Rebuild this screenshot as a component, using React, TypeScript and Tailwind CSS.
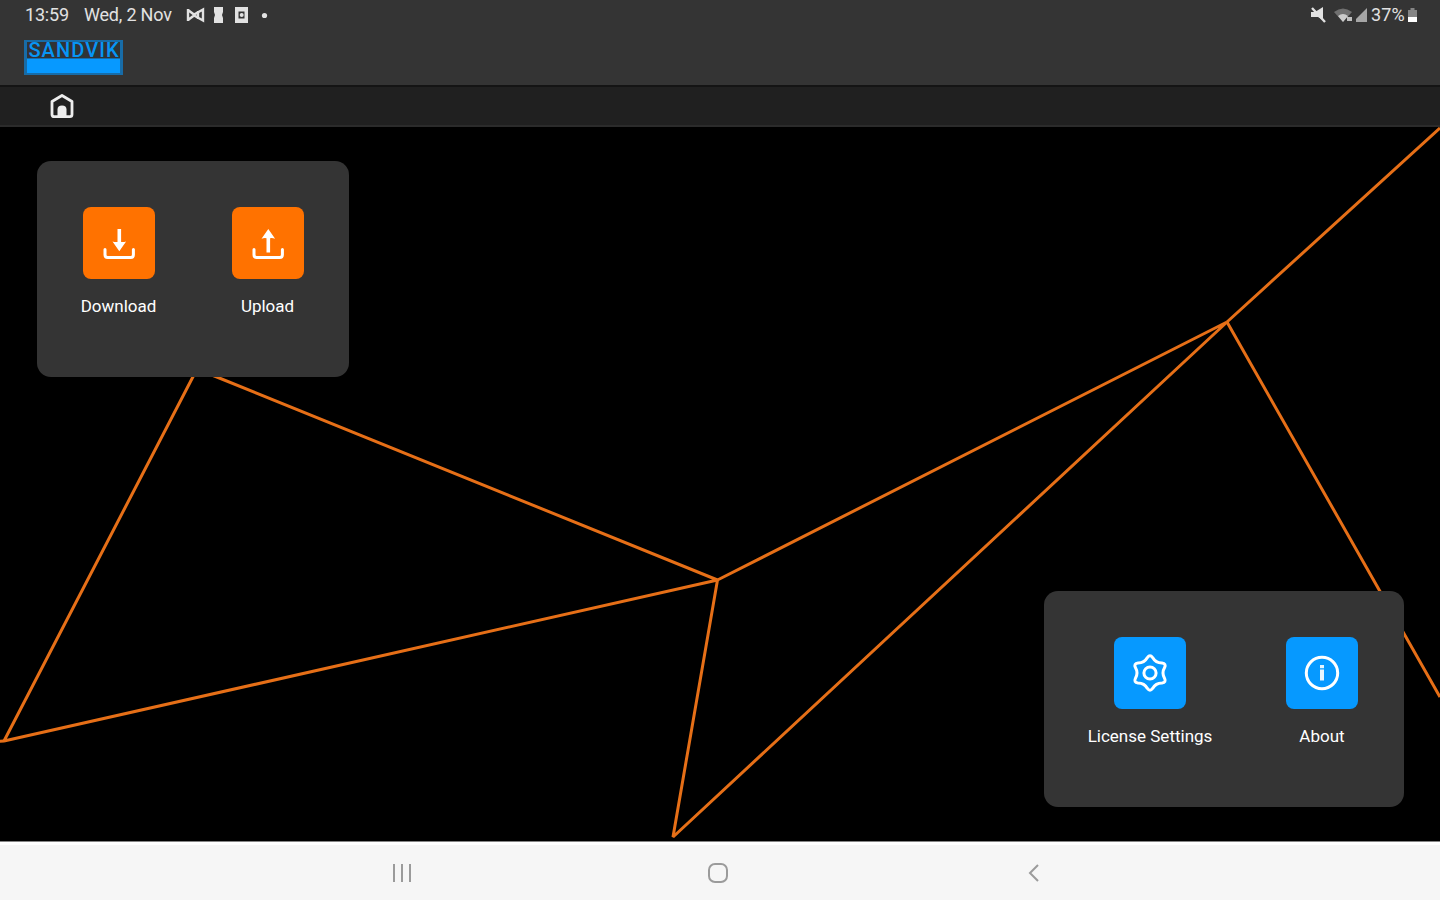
import React from 'react';

type IconProps = React.SVGProps<SVGSVGElement>;

const DownloadIcon = (props: IconProps) => (
    <svg viewBox="0 0 36 36" fill="none" stroke="currentColor" {...props}>
        <path strokeWidth={3} strokeLinecap="round" strokeLinejoin="round" d="M4 20.5v5.3q0 2.7 2.7 2.7h23q2.7 0 2.7-2.7v-5.3" />
        <path strokeWidth={3.6} d="M18.3 0v14" />
        <path fill="currentColor" stroke="none" d="M11.5 12.5q3.500 1.200 6.800 0 3.300 1.200 6.800 0l-6.800 9.700z" />
    </svg>
);

const UploadIcon = (props: IconProps) => (
    <svg viewBox="0 0 36 36" fill="none" stroke="currentColor" {...props}>
        <path strokeWidth={3} strokeLinecap="round" strokeLinejoin="round" d="M4 20.5v5.3q0 2.7 2.7 2.7h23q2.7 0 2.7-2.7v-5.3" />
        <path strokeWidth={3.6} d="M18.3 8v15.5" />
        <path fill="currentColor" stroke="none" d="M11.5 9.7q3.5-1.2 6.8 0 3.3-1.2 6.8 0L18.3 0z" />
    </svg>
);

const GearIcon = (props: IconProps) => (
    <svg viewBox="0 0 40 40" fill="none" stroke="currentColor" strokeWidth={3} strokeLinejoin="round" {...props}>
        <path d="M17.4 4.600Q20 1 22.600 4.600 25.700 10.100 32 10.050 36.500 10.500 34.600 14.550 31.400 20 34.600 25.450 36.500 29.500 32 29.950 25.700 29.900 22.600 35.400 20 39 17.400 35.400 14.300 29.900 8 29.950 3.500 29.500 5.400 25.450 8.600 20 5.400 14.550 3.500 10.500 8 10.050 14.300 10.100 17.400 4.600z" />
        <circle cx="20" cy="20" r="6.1" />
    </svg>
);

const InfoIcon = (props: IconProps) => (
    <svg viewBox="0 0 40 40" fill="none" stroke="currentColor" {...props}>
        <circle cx="20" cy="20" r="15.7" strokeWidth={3} />
        <path strokeWidth={4} opacity={0.9} d="M20 12v3.2M20 16.5v11" />
    </svg>
);

const HomeIcon = (props: IconProps) => (
    <svg viewBox="0 0 24 26" fill="none" stroke="currentColor" {...props}>
        <path strokeWidth={2.8} strokeLinejoin="round" d="M2 8.5 12 2.5l10 6v13q0 2.2-2.2 2.2H4.2Q2 23.7 2 21.5z" />
        <path fill="currentColor" stroke="none" d="M7.5 23v-6.5q0-4 4.5-4t4.5 4V23z" />
    </svg>
);

interface TileProps {
    label: string;
    color: 'orange' | 'blue';
    icon: React.ReactNode;
}

const Tile: React.FC<TileProps> = ({ label, color, icon }) => (
    <button className="flex w-[72px] flex-col items-center">
        <span className={`flex size-[72px] items-center justify-center rounded-lg ${color === 'orange' ? 'bg-[#ff7200]' : 'bg-[#0699ff]'}`}>
            {icon}
        </span>
        <span className="mt-[15px] whitespace-nowrap text-[17px] leading-6">{label}</span>
    </button>
);

const StatusBar: React.FC = () => (
    <div className="flex h-[30px] items-center justify-between pr-[23px] pl-[25px] text-[18px] leading-[30px] text-[#e2e2e2]">
        <div className="flex items-center">
            <span className="w-[59px] tracking-[-0.2px]">13:59</span>
            <span className="w-[102px] tracking-[-0.2px]">Wed, 2 Nov</span>
            <svg className="h-[18px] w-[84px]" viewBox="0 0 84 18" fill="currentColor">
                <path fill="none" stroke="currentColor" strokeWidth={2.4} d="M2 3v12M2 4l6 4.500 9-5v11l-9-5L2 14M12 5v8" />
                <path d="M28 1h9v5l-1 3 1 3v5h-9v-5l1-3L28 6z" />
                <path fillRule="evenodd" d="M49 1h13v16H49zM52.500 5.500v7h6v-7z" />
                <circle cx="55.7" cy="9" r="2" />
                <circle cx="78.5" cy="9.5" r="2.6" />
            </svg>
        </div>
        <div className="flex items-center">
            <svg className="h-[18px] w-[58px] overflow-visible" viewBox="0 0 58 18" fill="currentColor">
                <path d="M-2 6h4l8-5v13l-5-3h-7z" />
                <path fill="none" stroke="currentColor" strokeWidth={2.4} d="m-1 2 13 14" />
                <path opacity={0.35} d="M21 6q9-7 18 0l-9 10z" />
                <path d="M25 10q5-4 10 0l-5 6zM34 11h5v4h-5z" opacity={0.8} />
                <path d="M43 16v-3l11-11v14z" opacity={0.65} />
            </svg>
            <span className="w-[37px] tracking-[0.1px]">37%</span>
            <svg className="h-[18px] w-[9px]" viewBox="0 0 9 18">
                <path fill="#858585" d="M2.5 2h4v2H9v8H0V4h2.5z" />
                <path fill="#fff" d="M0 11h9v5H0z" />
            </svg>
        </div>
    </div>
);

const Logo: React.FC = () => (
    <div className="mt-[10px] ml-6 h-[35px] w-[99px] bg-[#176ca8] px-[3px] pt-[2px]">
        <div className="flex h-[16px] items-center justify-center bg-[#303336] text-[20px] leading-none font-medium text-[#0795f5]">
            <span className="-mr-[1.1px] whitespace-nowrap tracking-[1.1px]">SANDVIK</span>
        </div>
        <div className="mt-px h-[14px] bg-[#0799ff]" />
    </div>
);

const Backdrop: React.FC = () => (
    <svg className="absolute inset-0 h-full w-full" viewBox="0 127 1440 714" fill="none" stroke="#e66f17" strokeWidth={3}>
        <path strokeLinejoin="bevel" d="M717.5 580 197 369 4 741 717.5 580 1227 322 673 837z" />
        <path d="m-2 741.5 6-.5M1227 322l213-194M1227 322l213 375" />
    </svg>
);

export default function App() {
    return (
        <div className="flex h-[900px] w-[1440px] flex-col overflow-hidden bg-black font-[Roboto,sans-serif] text-white">
            <header className="h-[85px] shrink-0 bg-[#343434]">
                <StatusBar />
                <Logo />
            </header>
            <nav className="flex h-[42px] shrink-0 items-center border-t-2 border-b-2 border-t-[#141414] border-b-[#2b2b2b] bg-[#202020] pl-[50px]">
                <HomeIcon className="h-[26px] w-6 text-[#ededed]" />
            </nav>
            <main className="relative flex h-[714px] shrink-0 justify-between py-[34px] pr-9 pl-[37px]">
                <Backdrop />
                <section className="relative flex h-[216px] w-[312px] justify-between self-start rounded-[14px] bg-[#343434] px-[45.5px] pt-[46px]">
                    <Tile label="Download" color="orange" icon={<DownloadIcon className="mt-2 ml-px size-9" />} />
                    <Tile label="Upload" color="orange" icon={<UploadIcon className="mt-2 ml-px size-9" />} />
                </section>
                <section className="relative flex h-[216px] w-[360px] justify-between self-end rounded-[14px] bg-[#343434] pt-[46px] pr-[46px] pl-[70px]">
                    <Tile label="License Settings" color="blue" icon={<GearIcon className="size-10" />} />
                    <Tile label="About" color="blue" icon={<InfoIcon className="size-10" />} />
                </section>
            </main>
            <footer className="flex flex-1 justify-between border-t border-[#858585] bg-[#f6f6f6] pt-5 pr-[396px] pl-[391px] text-[#9b9b9b] shadow-[inset_0_3px_#fff]">
                <svg className="size-[22px]" viewBox="0 0 22 22" stroke="currentColor" strokeWidth={2}>
                    <path d="M3 2v18M11 2v18M19 2v18" />
                </svg>
                <svg className="size-[22px]" viewBox="0 0 22 22" fill="none" stroke="currentColor" strokeWidth={2}>
                    <rect x="2" y="2" width="18" height="18" rx="6" />
                </svg>
                <svg className="size-[22px]" viewBox="0 0 22 22" fill="none" stroke="currentColor" strokeWidth={2}>
                    <path d="m16 3-8 8 8 8" />
                </svg>
            </footer>
        </div>
    );
}
